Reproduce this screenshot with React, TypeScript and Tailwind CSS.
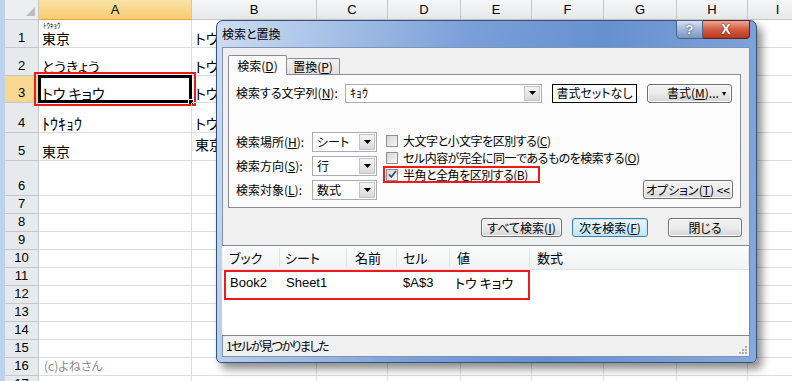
import React from 'react';

const colW = ['w-[153px]', 'w-[125px]', 'w-[71px]', 'w-[73px]', 'w-[71px]', 'w-[72px]', 'w-[73px]', 'w-[71px]', 'w-[60px]'];
const letters = ['A', 'B', 'C', 'D', 'E', 'F', 'G', 'H', 'I'];
const rowH = ['h-[28px]', 'h-[28px]', 'h-[27px]', 'h-[30px]', 'h-[28px]', 'h-[35px]', 'h-[18px]', 'h-[18px]', 'h-[18px]', 'h-[18px]', 'h-[18px]', 'h-[18px]', 'h-[18px]', 'h-[18px]', 'h-[18px]', 'h-[18px]', 'h-[18px]'];

const cellA: Record<number, React.ReactNode> = {
  1: (
    <div className="relative">
      <span className="absolute -top-[8px] left-[1px] text-[7px] leading-none">ﾄｳｷｮｳ</span>
      東京
    </div>
  ),
  2: 'とうきょう',
  3: 'トウ キョウ',
  4: <span className="text-[16px]">ﾄｳｷｮｳ</span>,
  5: '東京',
};
const cellB: Record<number, string> = { 1: 'トウキョウ', 2: 'トウキョウ', 3: 'トウ キョウ', 4: 'トウキョウ', 5: '東京' };

function Arrow() {
  return (
    <svg width="7" height="4" viewBox="0 0 7 4">
      <path d="M0 0h7L3.5 4z" fill="#000" />
    </svg>
  );
}

function DropBtn() {
  return (
    <div className="flex h-full w-[16px] shrink-0 items-center justify-center border border-[#c4c4c4] bg-gradient-to-b from-[#f4f4f4] to-[#d8d8d8]">
      <Arrow />
    </div>
  );
}

function Select({ value }: { value: string }) {
  return (
    <div className="flex h-[20px] w-[65px] items-center border border-[#abadb3] bg-white p-px">
      <span className="flex-1 pl-[3px] text-[12px]">{value}</span>
      <DropBtn />
    </div>
  );
}

function Check({ checked }: { checked?: boolean }) {
  return (
    <div className="flex h-[12px] w-[12px] shrink-0 items-center justify-center border border-[#8e8f8f] bg-gradient-to-br from-[#d4d4d4] to-[#f8f8f8]">
      {checked && (
        <svg width="9" height="9" viewBox="0 0 9 9">
          <path d="M1 4.5l2.3 2.5L8 1" stroke="#31457a" strokeWidth="1.7" fill="none" />
        </svg>
      )}
    </div>
  );
}

function Btn({ children, w, focus }: { children: React.ReactNode; w: string; focus?: boolean }) {
  return (
    <div
      className={`flex h-[19px] items-center justify-center rounded-[3px] border text-[12px] ${w} ${
        focus
          ? 'border-[#3c7fb1] bg-gradient-to-b from-[#eaf6fd] to-[#bee6fd] shadow-[inset_0_0_0_1px_#c4e5f6]'
          : 'border-[#707070] bg-gradient-to-b from-[#f2f2f2] via-[#ebebeb] to-[#d4d4d4] shadow-[inset_0_0_0_1px_#fcfcfc]'
      }`}
    >
      <span>{children}</span>
    </div>
  );
}

function Sheet() {
  return (
    <div className="flex w-[792px] flex-col overflow-hidden bg-white text-black">
      {/* column headers */}
      <div className="flex h-[20px]">
        <div className="w-[5px] shrink-0 bg-[#bfd2ec]" />
        <div className="relative w-[34px] shrink-0 border-r border-b border-[#c5c7ca] bg-[#eceef0]">
          <svg className="absolute bottom-[3px] right-[3px]" width="9" height="9" viewBox="0 0 9 9">
            <path d="M9 0v9H0z" fill="#bcbcbc" />
          </svg>
        </div>
        {letters.map((l, i) => (
          <div
            key={l}
            className={`${colW[i]} flex shrink-0 items-center justify-center border-r border-b text-[13px] [font-family:'Liberation_Sans',sans-serif] ${
              i === 0
                ? 'border-[#c5c7ca] border-b-[#f0a630] bg-gradient-to-b from-[#fbe2a6] to-[#f6cc6f]'
                : 'border-[#c5c7ca] bg-gradient-to-b from-[#f6f7f8] to-[#e6e8ea]'
            }`}
          >
            {l}
          </div>
        ))}
      </div>
      {rowH.map((h, r) => {
        const n = r + 1;
        return (
          <div key={n} className={`flex ${h}`}>
            <div className="w-[5px] shrink-0 bg-[#bfd2ec]" />
            <div
              className={`flex w-[34px] shrink-0 items-end justify-center border-r border-b pb-[1px] text-[13px] leading-[16px] [font-family:'Liberation_Sans',sans-serif] ${
                n === 3 ? 'border-[#c5c7ca] bg-[#f8d893]' : 'border-[#c5c7ca] bg-[#e7eaed]'
              }`}
            >
              {n}
            </div>
            {letters.map((l, i) => (
              <div
                key={l}
                className={`${colW[i]} relative flex shrink-0 items-end whitespace-nowrap border-r border-b border-[#dadcdd] pl-[3px] pb-[1px] text-[14px] leading-[16px] ${
                  i === 1 ? 'overflow-hidden' : ''
                }`}
              >
                {i === 0 && cellA[n]}
                {i === 1 && <span className={n === 5 ? 'mb-[7px]' : ''}>{cellB[n]}</span>}
                {i === 0 && n === 16 && <span className="pl-[2px] text-[12px] text-[#8a8a8a]">(c)よねさん</span>}
                {i === 0 && n === 3 && (
                  <>
                    <div className="absolute -left-px -top-px -right-px -bottom-px border-[3px] border-black" />
                    <div className="absolute -right-[3px] -bottom-[3px] h-[6px] w-[6px] border border-white bg-black" />
                    <div className="absolute -left-[5px] -top-[4px] -right-[5px] -bottom-[4px] border-2 border-[#f01818]" />
                  </>
                )}
              </div>
            ))}
          </div>
        );
      })}
    </div>
  );
}

function Dialog() {
  return (
    <div className="absolute left-[216px] top-[20px] flex h-[343px] w-[541px] flex-col rounded-t-[7px] rounded-b-[5px] border border-[#34527c] bg-[linear-gradient(100deg,#cddcf1_0%,#a9c3e7_18%,#7aa0d8_42%,#6690cf_65%,#86a9dc_100%)] shadow-[5px_6px_9px_rgba(0,0,0,0.45)]">
      {/* title bar */}
      <div className="relative flex h-[26px] shrink-0 items-center pl-[5px] text-[12px] text-black">
        <span>検索と置換</span>
        <div className="absolute right-[6px] -top-px flex">
          <div className="flex h-[19px] w-[27px] items-center justify-center rounded-bl-[4px] border border-[#4a628a] bg-gradient-to-b from-[#d7e2f1] via-[#a4b9d8] to-[#7a96c2] text-[13px] font-bold text-white [text-shadow:0_0_2px_#1a2a48] [font-family:'Liberation_Sans',sans-serif]">
            ?
          </div>
          <div className="flex h-[19px] w-[47px] items-center justify-center rounded-br-[4px] border border-l-0 border-[#5a2418] bg-gradient-to-b from-[#e9a797] via-[#d25b41] to-[#b8381f] text-[14px] font-bold text-white [text-shadow:0_0_2px_#4a1006] [font-family:'Liberation_Sans',sans-serif]">
            X
          </div>
        </div>
      </div>

      {/* client area */}
      <div className="ml-[5px] mr-[6px] mb-[5px] flex flex-1 flex-col border border-[#7e94b4] bg-[#f0f0f0]">
        {/* tabs */}
        <div className="ml-[5px] mt-[7px] flex items-end">
          <div className="relative z-10 -mb-px flex h-[20px] w-[59px] items-center justify-center rounded-t-[2px] border border-b-0 border-[#898c95] bg-[#fcfcfc] text-[12px]">
            <span>検索(<u>D</u>)</span>
          </div>
          <div className="flex h-[16px] w-[53px] items-center justify-center rounded-t-[2px] border border-l-0 border-b-0 border-[#898c95] bg-gradient-to-b from-[#f3f3f3] to-[#e2e2e2] text-[12px]">
            <span>置換(<u>P</u>)</span>
          </div>
        </div>

        {/* tab page */}
        <div className="ml-[5px] flex h-[134px] w-[513px] flex-col border border-[#898c95] bg-[#fcfcfc] px-[7px] pt-[9px] text-[12px]">
          <div className="flex h-[18px] items-center">
            <span className="w-[109px] shrink-0">検索する文字列(<u>N</u>):</span>
            <div className="flex h-[19px] w-[197px] shrink-0 items-center border border-[#abadb3] bg-white p-px">
              <span className="flex-1 pl-[3px]">ｷｮｳ</span>
              <DropBtn />
            </div>
            <div className="ml-[10px] flex h-[19px] w-[85px] shrink-0 items-center justify-center border border-black bg-white">
              書式セットなし
            </div>
            <div className="ml-[10px] flex h-[19px] w-[85px] shrink-0 items-center rounded-[3px] border border-[#707070] bg-gradient-to-b from-[#f2f2f2] via-[#ebebeb] to-[#d4d4d4] pl-[19px] shadow-[inset_0_0_0_1px_#fcfcfc]">
              <span className="flex-1">書式(<u>M</u>)...</span>
              <span className="mr-[5px] text-[8px]">▾</span>
            </div>
          </div>

          <div className="mt-[30px] flex items-start">
            <div className="flex shrink-0 flex-col gap-[4px]">
              <div className="flex items-center">
                <span className="w-[76px]">検索場所(<u>H</u>):</span>
                <Select value="シート" />
              </div>
              <div className="flex items-center">
                <span className="w-[76px]">検索方向(<u>S</u>):</span>
                <Select value="行" />
              </div>
              <div className="flex items-center">
                <span className="w-[76px]">検索対象(<u>L</u>):</span>
                <Select value="数式" />
              </div>
            </div>
            <div className="ml-[6px] flex w-[157px] shrink-0 flex-col tracking-[-0.5px]">
              <div className="flex h-[17px] items-center gap-[5px] whitespace-nowrap pl-[3px]">
                <Check />
                <span>大文字と小文字を区別する(<u>C</u>)</span>
              </div>
              <div className="flex h-[17px] items-center gap-[5px] whitespace-nowrap pl-[3px]">
                <Check />
                <span>セル内容が完全に同一であるものを検索する(<u>O</u>)</span>
              </div>
              <div className="relative flex h-[17px] items-center gap-[5px] whitespace-nowrap pl-[3px]">
                <Check checked />
                <span>半角と全角を区別する(<u>B</u>)</span>
                <div className="absolute inset-0 border-2 border-[#f01818]" />
              </div>
            </div>
            <div className="ml-auto mb-[1px] self-end">
              <Btn w="w-[90px]">
                オプション(<u>T</u>) &lt;&lt;
              </Btn>
            </div>
          </div>
        </div>

        {/* buttons */}
        <div className="mt-[10px] flex justify-end pr-[7px]">
          <Btn w="w-[81px]">
            すべて検索(<u>I</u>)
          </Btn>
          <div className="ml-[10px]">
            <Btn w="w-[76px]" focus>
              次を検索(<u>F</u>)
            </Btn>
          </div>
          <div className="ml-[20px]">
            <Btn w="w-[74px]">閉じる</Btn>
          </div>
        </div>

        {/* results list */}
        <div className="mt-[8px] -ml-px flex h-[91px] w-[528px] flex-col border-y border-r border-[#828790] bg-white text-[13px]">
          <div className="flex h-[24px] shrink-0 items-center border-b border-[#e5e5e5] bg-gradient-to-b from-[#fdfdfd] to-[#f1f2f3]">
            <span className="w-[58px] border-r border-[#e2e3e4] pl-[7px]">ブック</span>
            <span className="w-[67px] border-r border-[#e2e3e4] pl-[5px]">シート</span>
            <span className="w-[50px] border-r border-[#e2e3e4] pl-[8px]">名前</span>
            <span className="w-[53px] border-r border-[#e2e3e4] pl-[6px]">セル</span>
            <span className="w-[80px] border-r border-[#e2e3e4] pl-[7px]">値</span>
            <span className="flex-1 border-r border-[#e2e3e4] pl-[7px]">数式</span>
          </div>
          <div className="relative flex h-[30px] items-start pt-[3px] [font-family:'Liberation_Sans','Noto_Sans_CJK_JP',sans-serif]">
            <span className="w-[58px] pl-[8px]">Book2</span>
            <span className="w-[67px] pl-[6px]">Sheet1</span>
            <span className="w-[50px]" />
            <span className="w-[53px] pl-[6px]">$A$3</span>
            <span className="w-[80px] pl-[5px] [font-family:'Noto_Sans_CJK_JP',sans-serif]">トウ キョウ</span>
            <div className="absolute left-[2px] top-0 h-[30px] w-[306px] border-2 border-[#f01818]" />
          </div>
        </div>

        {/* status */}
        <div className="relative flex flex-1 items-center pl-[3px] text-[12px] tracking-[-1.5px]">
          <span>1セルが見つかりました</span>
          <svg className="absolute right-[2px] bottom-[2px]" width="10" height="10" viewBox="0 0 10 10">
            <g fill="#b0b0b0">
              <rect x="8" y="2" width="2" height="2" />
              <rect x="5" y="5" width="2" height="2" />
              <rect x="8" y="5" width="2" height="2" />
              <rect x="2" y="8" width="2" height="2" />
              <rect x="5" y="8" width="2" height="2" />
              <rect x="8" y="8" width="2" height="2" />
            </g>
          </svg>
        </div>
      </div>
    </div>
  );
}

export default function App() {
  return (
    <div className="relative h-[381px] w-[792px] overflow-hidden bg-white [font-family:'Noto_Sans_CJK_JP',sans-serif] [font-feature-settings:'palt']">
      <Sheet />
      <Dialog />
    </div>
  );
}
